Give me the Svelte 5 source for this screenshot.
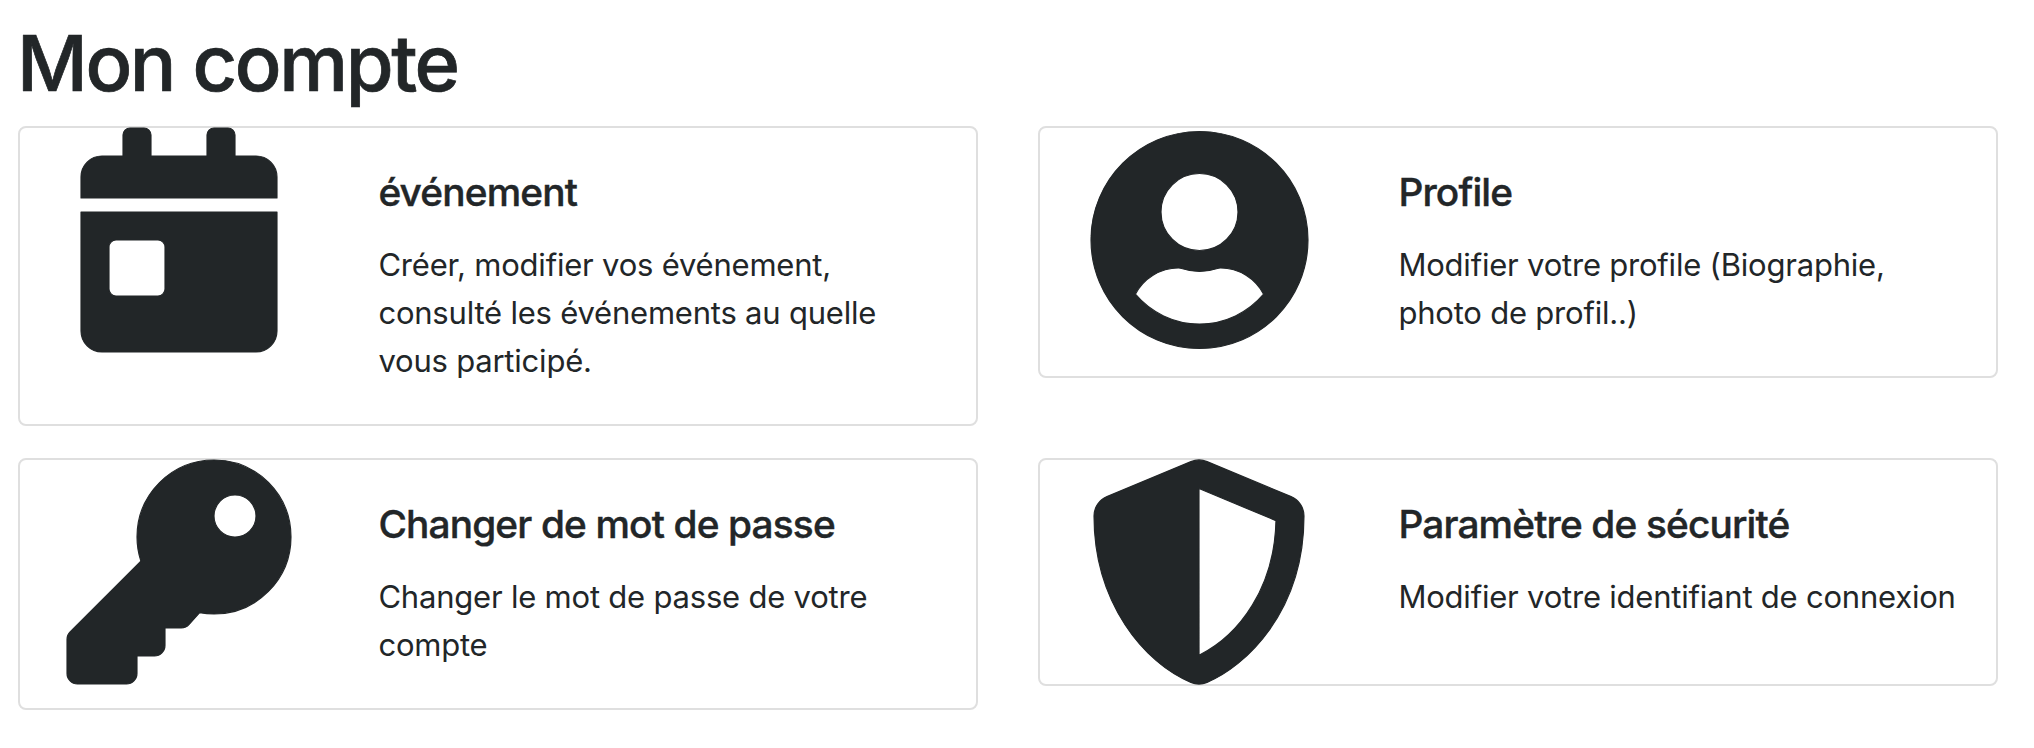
<script>
  const cards = [
    {
      title: 'événement',
      lines: ['Créer, modifier vos événement,', 'consulté les événements au quelle', 'vous participé.'],
      viewBox: '0 0 448 512',
      path: 'M0 464c0 26.5 21.5 48 48 48h352c26.5 0 48-21.5 48-48V192H0v272zm64-192c0-8.8 7.2-16 16-16h96c8.8 0 16 7.2 16 16v96c0 8.8-7.2 16-16 16H80c-8.8 0-16-7.2-16-16v-96zM400 64h-48V16c0-8.8-7.2-16-16-16h-32c-8.8 0-16 7.2-16 16v48H160V16c0-8.8-7.2-16-16-16h-32c-8.8 0-16 7.2-16 16v48H48C21.5 64 0 85.5 0 112v48h448v-48c0-26.5-21.5-48-48-48z'
    },
    {
      title: 'Profile',
      lines: ['Modifier votre profile (Biographie,', 'photo de profil..)'],
      viewBox: '0 0 496 512',
      path: 'M248 8C111 8 0 119 0 256s111 248 248 248 248-111 248-248S385 8 248 8zm0 96c48.6 0 88 39.4 88 88s-39.4 88-88 88-88-39.4-88-88 39.4-88 88-88zm0 344c-58.7 0-111.3-26.6-146.5-68.2 18.8-35.4 55.6-59.8 98.5-59.8 2.4 0 4.8.4 7.1 1.1 13 4.2 26.6 6.9 40.9 6.9s28-2.7 40.9-6.9c2.3-.7 4.7-1.1 7.1-1.1 42.9 0 79.7 24.4 98.5 59.8C359.3 421.4 306.7 448 248 448z'
    },
    {
      title: 'Changer de mot de passe',
      lines: ['Changer le mot de passe de votre', 'compte'],
      viewBox: '0 0 512 512',
      path: 'M512 176.001C512 273.203 433.202 352 336 352c-11.22 0-22.19-1.062-32.827-3.069l-24.012 27.014A23.999 23.999 0 0 1 261.223 384H224v40c0 13.255-10.745 24-24 24h-40v40c0 13.255-10.745 24-24 24H24c-13.255 0-24-10.745-24-24v-78.059c0-6.365 2.529-12.47 7.029-16.971l161.802-161.802C163.108 213.814 160 195.271 160 176 160 78.798 238.797.001 335.999 0 433.488-.001 512 78.511 512 176.001zM336 128c0 26.51 21.49 48 48 48s48-21.49 48-48-21.49-48-48-48-48 21.49-48 48z'
    },
    {
      title: 'Paramètre de sécurité',
      lines: ['Modifier votre identifiant de connexion'],
      viewBox: '0 0 512 512',
      path: 'M466.5 83.7l-192-80a48.15 48.15 0 0 0-36.9 0l-192 80C27.7 91.1 16 108.6 16 128c0 198.5 114.5 335.7 221.5 380.3 11.8 4.9 25.1 4.9 36.9 0C360.1 472.6 496 349.3 496 128c0-19.4-11.7-36.9-29.5-44.3zM256.1 446.3l-.1-381 175.9 73.3c-3.3 151.4-82.1 261.1-175.8 307.7z'
    }
  ];
</script>

<main>
  <h1>Mon compte</h1>
  <div class="grid">
    {#each cards as card}
      <section class="card">
        <div class="icon">
          <svg viewBox={card.viewBox} aria-hidden="true"><path d={card.path} /></svg>
        </div>
        <div class="body">
          <h2>{card.title}</h2>
          <p>{#each card.lines as line}<span>{line}</span>{/each}</p>
        </div>
      </section>
    {/each}
  </div>
</main>

<style>
  :global(body) { background: #fff; }
  main {
    box-sizing: border-box;
    padding: 15px 36px 0 17px;
    color: #222628;
    font-family: Inter, sans-serif;
  }
  h1 {
    margin: 0 0 15px;
    font-size: 77.5px;
    line-height: 96px;
    font-weight: 500;
    letter-spacing: -2.35px;
    -webkit-text-stroke: 0.7px #222628;
  }
  .grid {
    display: grid;
    grid-template-columns: 960px 960px;
    column-gap: 60px;
    row-gap: 32px;
    align-items: start;
    margin-left: 1px;
  }
  .card {
    box-sizing: border-box;
    display: flex;
    border: 2px solid #dfdfdf;
    border-radius: 8px;
  }
  .icon {
    flex: none;
    width: 318px;
    height: 224px;
    display: flex;
    justify-content: center;
  }
  svg {
    flex: none;
    height: 224px;
    margin-top: -0.5px;
    overflow: visible;
  }
  path {
    fill: #222628;
    stroke: #222628;
    stroke-width: 2.6;
    stroke-linejoin: round;
  }
  .body { padding: 40px 0 39px 40.4px; }
  h2 {
    margin: 0 0 25px;
    font-size: 38.8px;
    line-height: 48px;
    font-weight: 500;
    letter-spacing: -0.85px;
    -webkit-text-stroke: 0.4px #222628;
  }
  p {
    margin: 0;
    font-size: 31px;
    line-height: 48px;
    letter-spacing: -0.21px;
  }
  span { display: block; white-space: nowrap; }
</style>
